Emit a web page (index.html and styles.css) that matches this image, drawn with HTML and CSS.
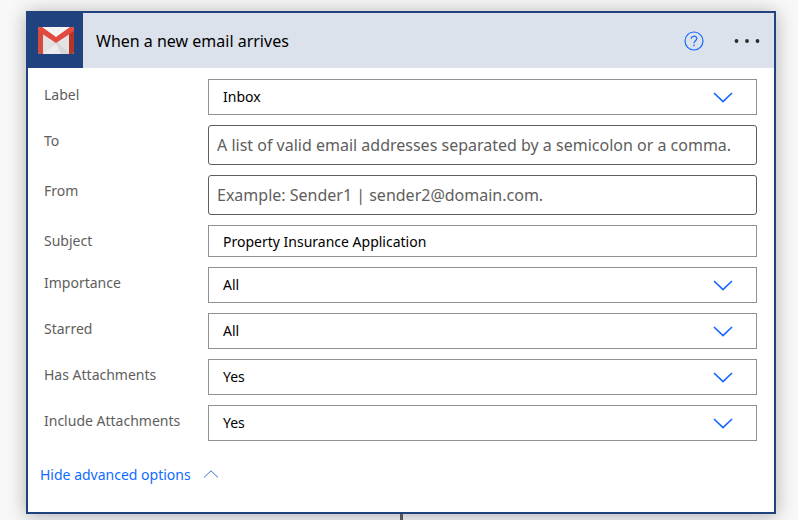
FILE: index.html
```html
<!DOCTYPE html>
<html lang="en">
<head>
    <meta charset="UTF-8">
    <title>When a new email arrives</title>
    <link rel="stylesheet" href="styles.css">
</head>
<body>
    <div class="card">
        <!-- Card Header -->
        <div class="card-header">
            <div class="card-logo">
                <svg width="38" height="30" viewBox="0 0 38 30" aria-hidden="true">
                    <rect x="1" y="1" width="36" height="27" rx="2" fill="#e3e3e3"/>
                    <path d="M5 28 L19 15 L33 28 Z" fill="#d8d8d8"/>
                    <path d="M5 28 L19 17 L24 28 Z" fill="#ececec"/>
                    <path d="M4 1 H34 L19 13 Z" fill="#f3f3f3"/>
                    <path d="M1 3 L6 6 V28 H3 Q1 28 1 26 Z" fill="#d54b3d"/>
                    <path d="M37 3 L32 6 V28 H35 Q37 28 37 26 Z" fill="#b63529"/>
                    <path d="M1 5 V3 Q1 1 3 1 H5 L19 11 L33 1 H35 Q37 1 37 3 V5 L19 17 Z" fill="#e04a3f"/>
                </svg>
            </div>
            <h1 class="card-title">When a new email arrives</h1>
            <button class="icon-button" type="button" aria-label="Help">
                <svg width="20" height="20" viewBox="0 0 20 20" fill="none" stroke="#1768ff">
                    <circle cx="10" cy="10" r="9" stroke-width="1.2"/>
                    <path d="M7.3 7.8 C7.3 4.4 12.8 4.4 12.8 7.6 C12.8 9.7 10 9.9 10 12.2" stroke-width="1.2"/>
                    <circle cx="10" cy="14.4" r="0.8" fill="#1768ff" stroke="none"/>
                </svg>
            </button>
            <button class="icon-button" type="button" aria-label="More">
                <svg width="26" height="20" viewBox="0 0 26 20" fill="#2b2b2b">
                    <circle cx="2.5" cy="10" r="1.9"/>
                    <circle cx="13" cy="10" r="1.9"/>
                    <circle cx="23.5" cy="10" r="1.9"/>
                </svg>
            </button>
        </div>

        <!-- Card Body -->
        <form class="card-body">
            <div class="field">
                <label class="field-label" for="label">Label</label>
                <div class="select-wrap">
                    <select class="select" id="label"><option>Inbox</option></select>
                    <svg class="chevron" width="20" height="12" viewBox="0 0 20 12"><path d="M1 2 L10 10.6 L19 2"/></svg>
                </div>
            </div>
            <div class="field">
                <label class="field-label" for="to">To</label>
                <input class="input email-input" id="to" type="text" placeholder="A list of valid email addresses separated by a semicolon or a comma.">
            </div>
            <div class="field">
                <label class="field-label" for="from">From</label>
                <input class="input email-input" id="from" type="text" placeholder="Example: Sender1 | sender2@domain.com.">
            </div>
            <div class="field">
                <label class="field-label" for="subject">Subject</label>
                <input class="input" id="subject" type="text" value="Property Insurance Application">
            </div>
            <div class="field">
                <label class="field-label" for="importance">Importance</label>
                <div class="select-wrap">
                    <select class="select" id="importance"><option>All</option></select>
                    <svg class="chevron" width="20" height="12" viewBox="0 0 20 12"><path d="M1 2 L10 10.6 L19 2"/></svg>
                </div>
            </div>
            <div class="field">
                <label class="field-label" for="starred">Starred</label>
                <div class="select-wrap">
                    <select class="select" id="starred"><option>All</option></select>
                    <svg class="chevron" width="20" height="12" viewBox="0 0 20 12"><path d="M1 2 L10 10.6 L19 2"/></svg>
                </div>
            </div>
            <div class="field">
                <label class="field-label" for="has">Has Attachments</label>
                <div class="select-wrap">
                    <select class="select" id="has"><option>Yes</option></select>
                    <svg class="chevron" width="20" height="12" viewBox="0 0 20 12"><path d="M1 2 L10 10.6 L19 2"/></svg>
                </div>
            </div>
            <div class="field">
                <label class="field-label" for="include">Include Attachments</label>
                <div class="select-wrap">
                    <select class="select" id="include"><option>Yes</option></select>
                    <svg class="chevron" width="20" height="12" viewBox="0 0 20 12"><path d="M1 2 L10 10.6 L19 2"/></svg>
                </div>
            </div>
        </form>

        <!-- Card Footer -->
        <div class="card-footer">
            <button class="toggle" type="button">
                Hide advanced options
                <svg width="16" height="10" viewBox="0 0 16 10"><path d="M1 7.5 L8 0.8 L15 7.5"/></svg>
            </button>
        </div>
    </div>
    <!-- Line to the next step -->
    <div class="connector"></div>
</body>
</html>
```

FILE: styles.css
```css
* {
    box-sizing: border-box;
}

body {
    margin: 0;
    padding: 11px 22px 0 26px;
    height: 100vh;
    overflow: hidden;
    background: #f8f8f8;
    font-family: "Noto Sans", "Open Sans", sans-serif;
    font-size: 14px;
    line-height: 20px;
}

.card {
    background: #fff;
    border: 2px solid #20427f;
    box-shadow: 0 2px 18px rgba(0, 0, 0, 0.3);
}

.card-header {
    display: flex;
    align-items: center;
    height: 55px;
    padding-right: 14px;
    background: #dce2ec;
}

.card-logo {
    display: flex;
    align-items: center;
    justify-content: center;
    width: 55px;
    height: 55px;
    background: #20427f;
}

.card-title {
    flex: 1;
    margin: 0;
    padding-left: 13px;
    font-size: 16px;
    font-weight: 400;
}

.icon-button {
    display: flex;
    margin-left: 30px;
    padding: 0;
    border: none;
    background: none;
    cursor: pointer;
}

.card-body {
    display: flex;
    flex-direction: column;
    gap: 10px;
    padding: 11px 17px 0 16px;
}

.field {
    display: grid;
    grid-template-columns: 164px 1fr;
    align-items: start;
}

.field-label {
    padding-top: 6px;
    color: #605e5c;
}

.select-wrap {
    display: grid;
    align-items: center;
}

.select,
.chevron {
    grid-area: 1 / 1;
}

.select,
.input {
    width: 100%;
    height: 36px;
    padding: 0 14px;
    border: 1px solid #919191;
    border-radius: 0;
    background: #fff;
    color: #000;
    font: inherit;
    appearance: none;
}

.input {
    height: 32px;
}

.email-input {
    height: 40px;
    padding: 0 8px;
    border-color: #605e5c;
    border-radius: 3px;
    font-size: 16px;
}

.email-input::placeholder {
    color: #605e5c;
}

.chevron {
    justify-self: end;
    margin-right: 24px;
    fill: none;
    stroke: #1768ff;
    stroke-width: 1.7;
    pointer-events: none;
}

.card-footer {
    padding: 24px 12px 27px;
}

.toggle {
    display: flex;
    align-items: center;
    gap: 12px;
    padding: 0;
    border: none;
    background: none;
    color: #0f6cff;
    font: inherit;
    cursor: pointer;
}

.toggle svg {
    fill: none;
    stroke: #3f6fd0;
}

.connector {
    width: 3px;
    height: 20px;
    margin: 0 auto;
    background: #555;
}
```
